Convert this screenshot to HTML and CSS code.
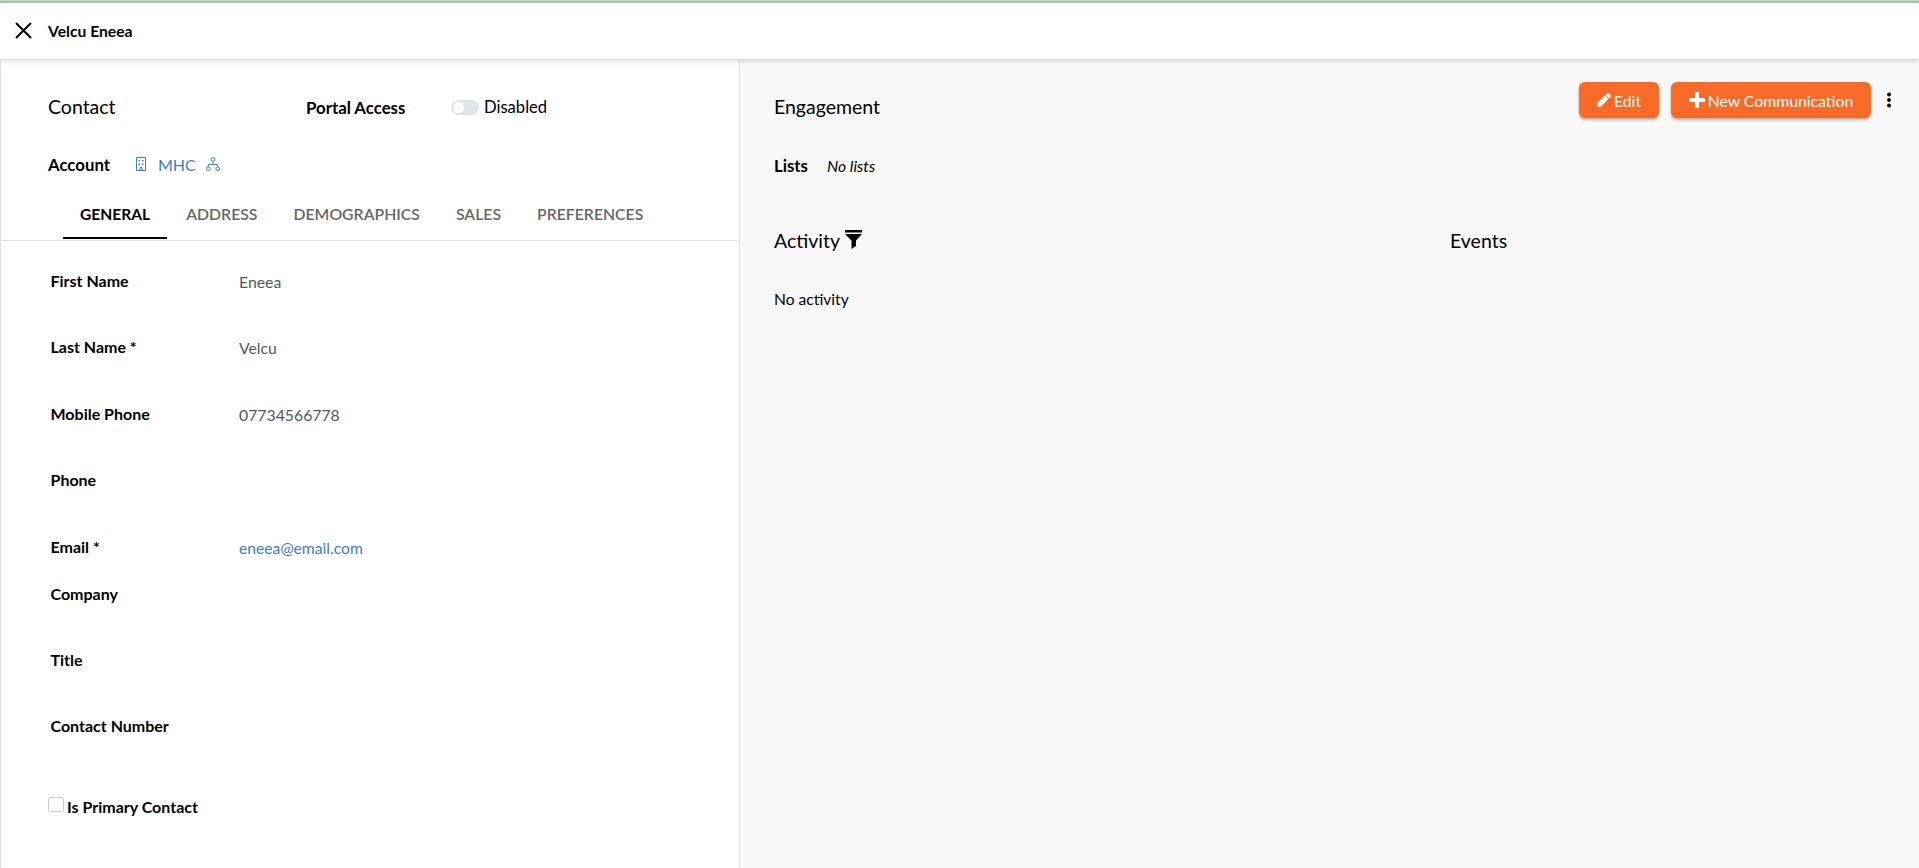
FILE: index.html
```html
<!DOCTYPE html>
<html lang="en">
<head>
<meta charset="utf-8">
<title>Velcu Eneea</title>
<link rel="stylesheet" href="styles.css">
</head>
<body>
<header class="topbar">
  <svg class="close-icon" viewBox="0 0 17 17" width="17" height="17"><path d="M1 1 16 16M16 1 1 16" stroke="#000" stroke-width="2" fill="none"/></svg>
  <span class="topbar-name">Velcu Eneea</span>
</header>
<main class="layout">
  <section class="left">
    <div class="contact-head">
      <h2 class="heading contact-title">Contact</h2>
      <span class="strong portal-label">Portal Access</span>
      <span class="toggle"><span class="knob"></span></span>
      <span class="disabled-text">Disabled</span>
    </div>
    <div class="account-row">
      <span class="strong account-label">Account</span>
      <svg class="building" viewBox="0 0 12 14" width="12" height="14"><path d="M1.500.5h9v13h-9zM5 13.500v-3h2v3" fill="none" stroke="#3f7cc4"/><path d="M3.500 3h1.500v1.500H3.500zM7 3h1.500v1.500H7zM3.500 6.500h1.500V8H3.500zM7 6.500h1.500V8H7z" fill="#3f7cc4"/></svg>
      <a class="link mhc">MHC</a>
      <svg class="tree" viewBox="0 0 14 14" width="14" height="14"><g fill="none" stroke="#3f7cc4"><circle cx="7" cy="2.500" r="1.800"/><circle cx="2.300" cy="11.700" r="1.800"/><circle cx="11.700" cy="11.700" r="1.800"/><path d="M7 4.500V7.500M2.300 10V7.500H11.700V10"/></g></svg>
    </div>
    <nav class="tabs">
      <a class="tab active">GENERAL</a>
      <a class="tab">ADDRESS</a>
      <a class="tab">DEMOGRAPHICS</a>
      <a class="tab">SALES</a>
      <a class="tab">PREFERENCES</a>
    </nav>
    <div class="form">
      <div class="row"><span class="label">First Name</span><span class="value">Eneea</span></div>
      <div class="row"><span class="label">Last Name *</span><span class="value">Velcu</span></div>
      <div class="row"><span class="label">Mobile Phone</span><span class="value">07734566778</span></div>
      <div class="row"><span class="label">Phone</span></div>
      <div class="row short"><span class="label">Email *</span><a class="value link">eneea@email.com</a></div>
      <div class="row"><span class="label">Company</span></div>
      <div class="row"><span class="label">Title</span></div>
      <div class="row tall"><span class="label">Contact Number</span></div>
      <div class="check-row"><span class="checkbox"></span><span class="label">Is Primary Contact</span></div>
    </div>
  </section>
  <section class="right">
    <div class="engage-head">
      <h2 class="heading">Engagement</h2>
      <div class="actions">
        <button class="btn"><svg viewBox="0 0 512 512" width="14" height="14"><path fill="#fff" d="M290.700 93.200l128 128L140.800 499.100 26.700 511.700C11.400 513.400-1.400 500.500.300 485.300l12.700-114.100zM497.900 74.100l-60-60c-18.700-18.700-49.100-18.700-67.900 0l-56.500 56.500 128 128 56.500-56.500c18.700-18.800 18.700-49.200-.1-68z"/></svg>Edit</button>
        <button class="btn btn-new"><svg viewBox="0 0 16 16" width="16" height="16"><path fill="#fff" d="M6 0h4v6h6v4h-6v6H6v-6H0V6h6z"/></svg>New Communication</button>
        <svg class="dots" viewBox="0 0 4 16" width="4" height="16"><circle cx="2" cy="2.500" r="1.900"/><circle cx="2" cy="8" r="1.900"/><circle cx="2" cy="13.500" r="1.900"/></svg>
      </div>
    </div>
    <div class="lists-row"><span class="strong">Lists</span><em class="no-lists">No lists</em></div>
    <div class="columns">
      <div class="col-activity">
        <div class="heading activity-head">Activity
          <svg class="funnel" viewBox="0 0 17 19" width="17" height="19"><path d="M0 0h17v2.500H0zM0 4h17L11 10.500V16L6.500 19V10.500z"/></svg>
        </div>
        <p class="no-activity">No activity</p>
      </div>
      <div class="col-events"><div class="heading">Events</div></div>
    </div>
  </section>
</main>
</body>
</html>
```
FILE: styles.css
```css
* { box-sizing: border-box; }
html, body { margin: 0; height: 100%; }
body {
  width: 1919px;
  height: 868px;
  overflow: hidden;
  display: flex;
  flex-direction: column;
  font-family: Lato, "Open Sans", sans-serif;
  font-size: 16px;
  color: #000;
  background: #d6e4d4;
}
.topbar {
  height: 58px;
  margin-top: 1px;
  flex: none;
  position: relative;
  z-index: 2;
  display: flex;
  align-items: center;
  padding: 0 0 1px 15px;
  border-top: 2px solid #a6c5a3;
  background: #fff;
  box-shadow: 0 1px 6px rgba(0, 0, 0, .2);
}
.close-icon { margin-right: 16px; }
.topbar-name { font-size: 15.700px; font-weight: 700; }
.layout { flex: 1; display: flex; min-height: 0; }
.left {
  width: 740px;
  flex: none;
  border-left: 1px solid #e3e3e3;
  border-right: 1px solid #e3e3e3;
  background: #fff;
}
.right {
  flex: 1;
  background: #f8f8f8;
  padding: 0 34px;
}
.heading { margin: 0; font-size: 19.500px; font-weight: 400; line-height: 26px; }
.strong { font-size: 16.800px; font-weight: 700; }
.contact-head {
  display: flex;
  align-items: center;
  height: 26px;
  margin-top: 35px;
  padding-left: 47px;
}
.contact-title { width: 258px; }
.portal-label { width: 145px; }
.toggle {
  width: 28px;
  height: 15px;
  border-radius: 8px;
  background: #dfe3ea;
  padding: 2px;
  display: flex;
  margin-right: 5px;
}
.knob { width: 11px; height: 11px; border-radius: 50%; background: #fff; }
.disabled-text { font-size: 16.600px; }
.account-row {
  display: flex;
  align-items: center;
  height: 24px;
  margin-top: 32px;
  padding-left: 47px;
}
.account-label { width: 87px; }
.link { color: #3f7cc4; }
.mhc { font-size: 16px; margin: 0 10px 0 11px; }
.tabs {
  display: flex;
  height: 48px;
  margin-top: 17px;
  padding-left: 62px;
  gap: 2px;
  border-bottom: 1px solid #e3e3e3;
}
.tab {
  padding: 9px 17px 0;
  font-size: 15.800px;
  font-weight: 600;
  color: #666;
  line-height: 24px;
}
.tab.active { color: #000; font-size: 15.600px; font-weight: 700; border-bottom: 2px solid #000; height: 46px; }
.form { padding: 28px 0 0 49.500px; }
.row { display: flex; height: 66.400px; line-height: 24px; }
.row.short { height: 47px; }
.row.tall { height: 81px; }
.label { font-weight: 700; font-size: 16px; }
.row .label { width: 188.500px; flex: none; }
.value { color: #555; font-size: 15.800px; padding-top: 1px; }
.value.link { color: #3f7cc4; font-size: 15.700px; }
.check-row { display: flex; align-items: flex-start; line-height: 24px; margin-left: -2.500px; }
.checkbox {
  width: 16px;
  height: 15px;
  margin: 2px 3px 0 0;
  border: 1px solid #c9ccd1;
  border-radius: 2px;
  background: #fff;
}
.engage-head { display: flex; justify-content: space-between; height: 59px; }
.engage-head .heading { margin-top: 35px; }
.actions { display: flex; align-items: center; height: 36px; margin: 23px -6px 0 0; }
.btn {
  display: flex;
  align-items: center;
  justify-content: center;
  gap: 3px;
  width: 80px;
  height: 36px;
  border: 0;
  border-radius: 6px;
  background: #f96a29;
  color: #fff;
  font: 400 15.800px Lato, sans-serif;
  box-shadow: 0 2px 3px rgba(0, 0, 0, .3);
}
.btn-new { width: 200px; margin-left: 12px; }
.dots { margin-left: 16px; }
.lists-row { display: flex; align-items: center; height: 24px; margin-top: 35px; }
.no-lists { margin-left: 19px; font-size: 15.800px; }
.columns { display: flex; margin-top: 51px; }
.col-activity { width: 676px; }
.activity-head { display: flex; align-items: center; gap: 5px; }
.funnel { position: relative; top: -2px; }
.no-activity { margin: 33px 0 0; line-height: 24px; font-size: 15.600px; }
```
